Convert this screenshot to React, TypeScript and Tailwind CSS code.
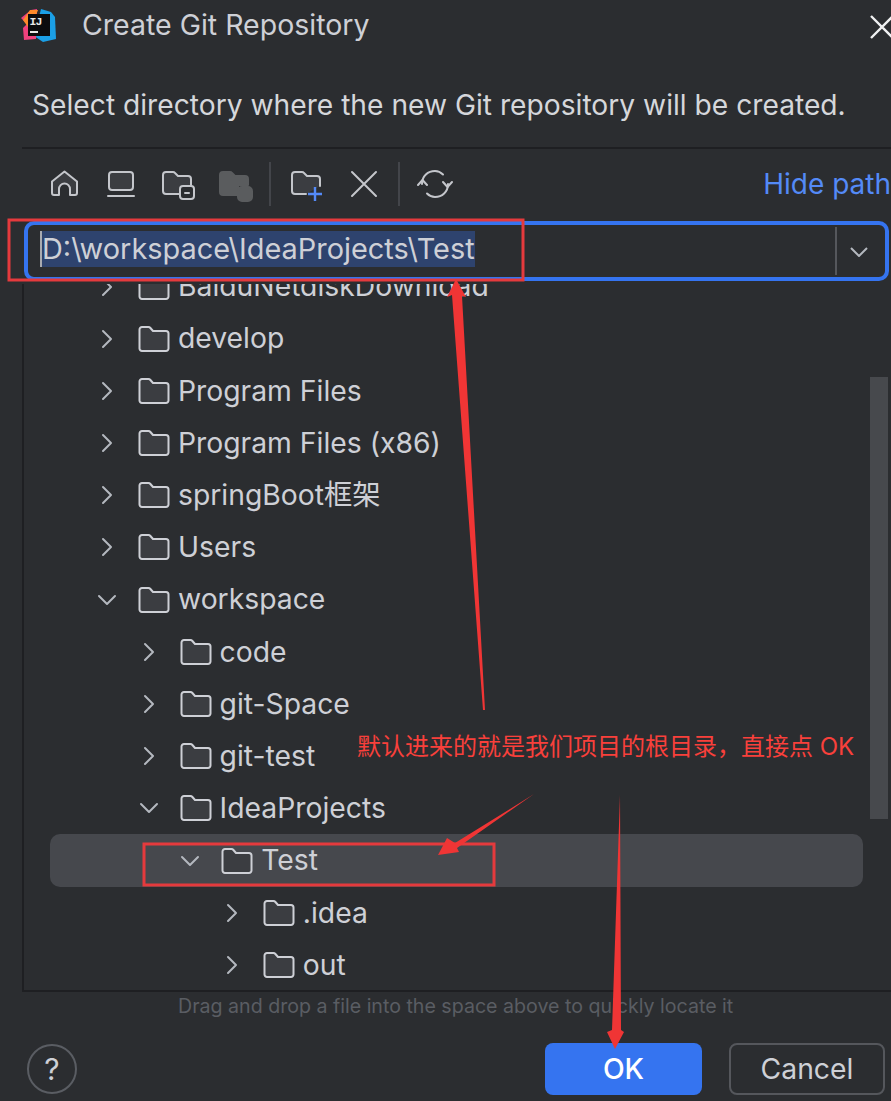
import React from "react";

const rows = [
  { name: "BaiduNetdiskDownload", depth: 0, open: false },
  { name: "develop", depth: 0, open: false },
  { name: "Program Files", depth: 0, open: false },
  { name: "Program Files (x86)", depth: 0, open: false },
  { name: "springBoot框架", depth: 0, open: false },
  { name: "Users", depth: 0, open: false },
  { name: "workspace", depth: 0, open: true },
  { name: "code", depth: 1, open: false },
  { name: "git-Space", depth: 1, open: false },
  { name: "git-test", depth: 1, open: false },
  { name: "IdeaProjects", depth: 1, open: true },
  { name: "Test", depth: 2, open: true, selected: true },
  { name: ".idea", depth: 3, open: false },
  { name: "out", depth: 3, open: false },
];

function Folder() {
  return (
    <svg width="32" height="28" viewBox="0 0 32 28" fill="none" className="shrink-0">
      <path
        d="M1.5 4.5a2.5 2.5 0 0 1 2.5-2.5h6.5c.8 0 1.4.4 1.9 1l2.6 3h13a2.5 2.5 0 0 1 2.5 2.5v15a2.5 2.5 0 0 1-2.5 2.5H4A2.5 2.5 0 0 1 1.5 23.5z"
        fill="#3b3d41"
        stroke="#ced0d6"
        strokeWidth="2"
        strokeLinejoin="round"
      />
    </svg>
  );
}

function Chevron({ open }: { open: boolean }) {
  return (
    <svg width="20" height="20" viewBox="0 0 20 20" fill="none" className="shrink-0">
      <path
        d={open ? "M2 6l8 8 8-8" : "M6 2l8 8-8 8"}
        stroke="#b4b8bf"
        strokeWidth="2"
        strokeLinecap="round"
        strokeLinejoin="round"
      />
    </svg>
  );
}

function ToolIcon({ children }: { children: React.ReactNode }) {
  return (
    <svg width="36" height="36" viewBox="0 0 36 36" fill="none" stroke="#c4c6cb" strokeWidth="2" strokeLinejoin="round" strokeLinecap="round" className="shrink-0">
      {children}
    </svg>
  );
}

function Toolbar() {
  return (
    <div className="flex h-[72px] items-center pb-[2px] pl-[24px]">
      <div className="flex w-[207px] justify-between">
        <ToolIcon>
          <path d="M6 15.5L18.5 5.5 31 15.5V27a2 2 0 0 1-2 2h-5v-6a5.5 5.5 0 0 0-11 0v6H8a2 2 0 0 1-2-2z" fill="#3b3d41" />
        </ToolIcon>
        <ToolIcon>
          <rect x="6" y="6" width="24" height="18" rx="3" fill="#3b3d41" />
          <path d="M5 30h26" />
        </ToolIcon>
        <ToolIcon>
          <path d="M19 28H6a3 3 0 0 1-3-3V9a3 3 0 0 1 3-3h7c1 0 1.500.3 2 1l3 3h10a3 3 0 0 1 3 3v6" fill="#3b3d41" />
          <rect x="20" y="20" width="14" height="13" rx="3" fill="#2b2d30" />
          <path d="M25 27h4" />
        </ToolIcon>
        <ToolIcon>
          <path d="M3 9a3 3 0 0 1 3-3h7c1 0 1.500.3 2 1l3 3h10a3 3 0 0 1 3 3v6H21v10H6a3 3 0 0 1-3-3z" fill="#5a5c5e" stroke="#5a5c5e" />
          <rect x="21" y="21" width="14" height="14" rx="4" fill="#5a5c5e" stroke="#5a5c5e" />
        </ToolIcon>
      </div>
      <div className="ml-[16px] h-[44px] w-[2px] bg-[#43454a]" />
      <div className="ml-[18px] flex w-[93px] justify-between">
        <ToolIcon>
          <path d="M17 28H6a3 3 0 0 1-3-3V9a3 3 0 0 1 3-3h7c1 0 1.500.3 2 1l3 3h10a3 3 0 0 1 3 3v7" fill="#3b3d41" />
          <path d="M26 21v14M19 28h14" stroke="#548af7" strokeLinecap="butt" strokeWidth="2.4" />
        </ToolIcon>
        <ToolIcon>
          <path d="M6 6l24 24M30 6L6 30" />
        </ToolIcon>
      </div>
      <div className="ml-[16px] h-[44px] w-[2px] bg-[#43454a]" />
      <div className="ml-[17px]">
        <ToolIcon>
          <path d="M5 18C5 10 11 5 18 5c3.500 0 6 1.500 8 3.500M31 18c0 8-6 13-13 13-3.500 0-6-1.500-8-3.500" />
          <path d="M1 19l4.500-5 4.500 5M35 16l-4.500 5-4.500-5" />
        </ToolIcon>
      </div>
      <span className="ml-auto whitespace-nowrap text-[28px] text-[#548af7]">Hide path</span>
    </div>
  );
}

export default function App() {
  return (
    <div
      className="relative flex h-[1101px] w-[891px] flex-col overflow-hidden bg-[#2b2d30] text-[#dfe1e5]"
      style={{ fontFamily: 'Inter, "Noto Sans CJK SC", sans-serif' }}
    >
      {/* title */}
      <div className="flex h-[52px] shrink-0 items-center pb-[1px] pl-[21px]">
        <svg width="36" height="36" viewBox="0 0 36 36" className="shrink-0">
          <path d="M20 1l10 3 4 5 1 22-13 3-9-6z" fill="#1b9fe6" />
          <path d="M10 2l6-1-1 30-12 1-1-12 4-4-6-6z" fill="#f0417e" />
          <path d="M2 12l7-10h8L9 22z" fill="#ff8a2a" />
          <rect x="7" y="6" width="22" height="22" fill="#0c0c0e" />
          <text x="8.500" y="17" fontSize="11.500" fontWeight="700" fill="#e8e8e8" fontFamily="Liberation Mono, monospace" letterSpacing="-1">IJ</text>
          <rect x="9" y="23" width="8" height="2" fill="#e8e8e8" />
        </svg>
        <span className="ml-[25px] text-[28.5px] text-[#ced0d6]">Create Git Repository</span>
        <svg width="24" height="24" viewBox="0 0 24 24" className="absolute left-[870px] top-[15px]" fill="none" stroke="#f0f1f2" strokeWidth="2.4">
          <path d="M1 1l22 22M23 1L1 23" />
        </svg>
      </div>

      <p className="mt-[29px] h-[48px] shrink-0 whitespace-nowrap pl-[32px] text-[28.2px] leading-[48px] text-[#d5d7db]">
        Select directory where the new Git repository will be created.
      </p>

      {/* file chooser */}
      <div className="ml-[22px] mt-[18px] flex h-[845px] shrink-0 flex-col">
        <div className="h-[2px] bg-[#1e1f22]" />
        <Toolbar />

        <div className="ml-[2px] flex h-[60px] w-[865px] shrink-0 items-center rounded-[10px] border-[4px] border-[#3574f0] pl-[12px]">
          <span className="-mt-[3px] whitespace-nowrap border-l-2 border-[#a9abb0] bg-[#2e436e] text-[28.9px] leading-[36px] text-[#ced0d6]">
            D:\workspace\IdeaProjects\Test
          </span>
          <div className="ml-auto flex h-full items-center">
            <div className="h-[48px] w-[2px] bg-[#55575c]" />
            <svg width="18" height="10" viewBox="0 0 18 10" fill="none" stroke="#b4b8bf" strokeWidth="2" className="ml-[13px] mr-[17px] mt-[2px]">
              <path d="M1 1l8 8 8-8" />
            </svg>
          </div>
        </div>

        <div className="relative mt-[3px] h-[709px] overflow-hidden border-b-2 border-l-2 border-[#1e1f22]">
          <div className="-mt-[23.5px]">
            {rows.map((r) => (
              <div
                key={r.name}
                className={`ml-[26px] mr-[28px] flex h-[52.2px] items-center rounded-[10px] ${r.selected ? "bg-[#46484d]" : ""}`}
              >
                <div
                  className="flex items-center"
                  style={{ paddingLeft: 47 + r.depth * 41.6 }}
                >
                  <Chevron open={r.open} />
                  <div className="ml-[21px]">
                    <Folder />
                  </div>
                  <span className="ml-[8px] whitespace-nowrap text-[28.3px] text-[#ced0d6]">{r.name}</span>
                </div>
              </div>
            ))}
          </div>
          <div className="absolute left-[846px] top-[93px] h-[442px] w-[18px] bg-[#47494d]" />
        </div>
      </div>

      <p className="mt-[2px] whitespace-nowrap pl-[178px] text-[19.6px] leading-[24px] text-[#5a5d63]">
        Drag and drop a file into the space above to quickly locate it
      </p>

      {/* footer */}
      <div className="mt-[25px] flex items-center pl-[27px]">
        <div className="flex h-[50px] w-[50px] items-center justify-center rounded-full border-2 border-[#5a5d63] text-[30px] text-[#ced0d6]">
          ?
        </div>
        <button className="ml-[468px] h-[52px] w-[157px] rounded-[8px] bg-[#3574f0] text-[28.3px] font-medium text-white">OK</button>
        <button className="ml-[27px] h-[52px] w-[156px] rounded-[8px] border-2 border-[#55575c] text-[28.3px] text-[#ced0d6]">Cancel</button>
      </div>

      {/* red annotations drawn over the dialog */}
      <svg width="891" height="1101" viewBox="0 0 891 1101" fill="none" className="pointer-events-none absolute left-0 top-0">
        <rect x="9" y="220" width="514" height="60" stroke="#e53a3d" strokeWidth="3" />
        <rect x="144" y="844" width="350" height="41" stroke="#e53a3d" strokeWidth="3" />
        <path d="M456 279L447 297 452 295 483 710 485 710 462 296 466 297z" fill="#f03535" />
        <path d="M534 794L455 843 447 838 438 855 459 852 457 848z" fill="#f03535" />
        <path d="M620 795L621 1030 624 1032 615 1049 607 1032 612 1030z" fill="#f03535" />
      </svg>
      <span className="absolute left-[357px] top-[730px] whitespace-nowrap text-[24px] leading-[34px] text-[#f9403b]">
        默认进来的就是我们项目的根目录，直接点 OK
      </span>
    </div>
  );
}
